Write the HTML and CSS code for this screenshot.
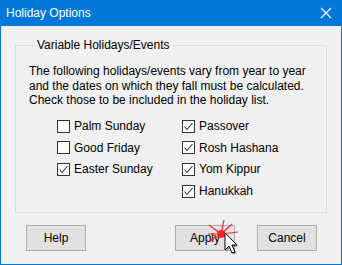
FILE: index.html
```html
<!DOCTYPE html>
<html lang="en">
<head>
    <meta charset="UTF-8">
    <title>Holiday Options</title>
    <link rel="stylesheet" href="styles.css">
</head>
<body>
    <div class="window">
        <!-- Title bar -->
        <header class="titlebar">
            <span class="title">Holiday Options</span>
            <svg class="close" width="12" height="12" viewBox="0 0 12 12">
                <path d="M1 1 L11 11 M11 1 L1 11" stroke="#fff" stroke-width="1.1" fill="none"/>
            </svg>
        </header>

        <div class="content">
            <fieldset class="group">
                <legend>Variable Holidays/Events</legend>
                <p class="intro">The following holidays/events vary from year to year<br>and the dates on which they fall must be calculated.<br>Check those to be included in the holiday list.</p>
                <div class="checks">
                    <label class="check"><span class="box"></span>Palm Sunday</label>
                    <label class="check"><span class="box on"></span>Passover</label>
                    <label class="check"><span class="box"></span>Good Friday</label>
                    <label class="check"><span class="box on"></span>Rosh Hashana</label>
                    <label class="check"><span class="box on"></span>Easter Sunday</label>
                    <label class="check"><span class="box on"></span>Yom Kippur</label>
                    <span></span>
                    <label class="check"><span class="box on"></span>Hanukkah</label>
                </div>
            </fieldset>

            <div class="buttons">
                <button class="btn">Help</button>
                <span class="spacer"></span>
                <button class="btn">Apply</button>
                <button class="btn">Cancel</button>
            </div>
        </div>

        <!-- mouse pointer with click flash -->
        <svg class="pointer" width="40" height="40" viewBox="0 0 40 40">
            <g stroke="#ff1a1a" stroke-width="1.2" opacity="0.9">
                <path d="M13 15 L1 6 M13 15 L16 1 M13 15 L24 5 M13 15 L30 13 M13 15 L26 24 M13 15 L2 22 M13 15 L0 15"/>
            </g>
            <circle cx="13" cy="15" r="4" fill="#ff2020"/>
            <path d="M17 14 L17 31 L21 27 L24 34 L27 33 L24 26 L29 26 Z" fill="rgba(0,0,0,0.35)" transform="translate(1.5,1.5)"/>
            <path d="M17 14 L17 31 L21 27 L24 34 L27 33 L24 26 L29 26 Z" fill="#fff" stroke="#000" stroke-width="1"/>
        </svg>
    </div>
</body>
</html>
```

FILE: styles.css
```css
body {
    margin: 0;
    font-family: "Liberation Sans", Arial, sans-serif;
    font-size: 12px;
    color: #000;
    background: #f0f0f0;
}
.window {
    position: relative;
    width: 342px;
    height: 265px;
    box-sizing: border-box;
    border: 1px solid #0078d7;
    border-top: none;
    background: #f0f0f0;
    overflow: hidden;
}
.titlebar {
    display: flex;
    align-items: center;
    justify-content: space-between;
    height: 26px;
    margin: 0 -1px;
    padding: 0 10px 0 6px;
    background: #0078d7;
    color: #fff;
}
.title {
    font-size: 12px;
}
.content {
    padding: 11px 14px 0 14px;
}
.group {
    margin: 0;
    padding: 11px 0 10px 13px;
    border: 1px solid #dcdcdc;
    height: 176px;
    box-sizing: border-box;
}
.group legend {
    padding: 0 2px;
    margin-left: 6px;
    line-height: 16px;
}
.intro {
    margin: 0;
    line-height: 14.5px;
}
.checks {
    display: grid;
    grid-template-columns: 125px 125px;
    grid-auto-rows: 21.6px;
    margin: 8px 0 0 28px;
}
.check {
    display: flex;
    align-items: center;
    gap: 4px;
}
.box {
    width: 11px;
    height: 11px;
    border: 1px solid #333;
    background: #fff;
}
.box.on {
    background: #fff url("data:image/svg+xml;utf8,<svg xmlns='http://www.w3.org/2000/svg' width='11' height='11'><path d='M1.5 5.5 L4 8.5 L9.5 2' stroke='%23333' stroke-width='1.1' fill='none'/></svg>") no-repeat center;
}
.buttons {
    display: flex;
    gap: 22px;
    margin-top: 12px;
    padding: 0 10px 0 11px;
}
.spacer {
    flex: 1;
}
.btn {
    width: 60px;
    height: 26px;
    font-family: inherit;
    font-size: 12px;
    background: #e1e1e1;
    border: 1px solid #adadad;
    padding: 0;
    color: #000;
}
.pointer {
    position: absolute;
    left: 207px;
    top: 219px;
}
```
